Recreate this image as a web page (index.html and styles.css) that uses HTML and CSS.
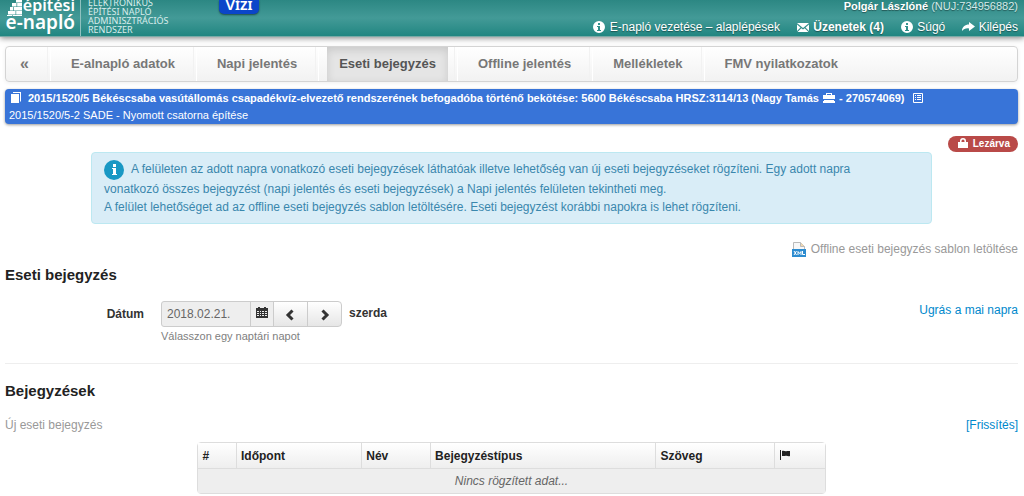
FILE: index.html
```html
<!DOCTYPE html>
<html lang="hu">
<head>
<meta charset="utf-8">
<title>e-napló – Eseti bejegyzés</title>
<link rel="stylesheet" href="styles.css">
</head>
<body>
<svg class="defs" aria-hidden="true">
  <symbol id="info" viewBox="0 0 14 14"><path fill="currentColor" fill-rule="evenodd" d="M7 1a6 6 0 1 0 0 12A6 6 0 0 0 7 1zM6 3h2v2H6zM5 6h3v4h1v1H5v-1h1V7H5z"/></symbol>
</svg>
<header class="top">
  <div class="brand">
    <svg class="bricks" viewBox="0 0 18 18" aria-hidden="true"><path fill="#fff" d="M10-1h6v3.400h-6zM6 3h4.500v3.400H6zM11.200 3H16v3.400h-4.800zM4 7h3v3.400H4zM7.700 7H16v3.400H7.700zM2 11h7.500v3.400H2zM10.200 11H16v3.400h-5.800zM1 15h5v1H1zM6.700 15H16v1H6.700z"/></svg>
    <div class="wordmark"><span class="word-a">építési</span><span class="word-b">e-napló</span></div>
    <div class="tagline">ELEKTRONIKUS<br>ÉPÍTÉSI NAPLÓ<br>ADMINISZTRÁCIÓS<br>RENDSZER</div>
  </div>
  <a class="water" href="#">Vízi</a>
  <div class="account">
    <div class="user"><b>Polgár Lászlóné</b> (NUJ:734956882)</div>
    <nav class="links">
      <a href="#"><svg class="ico"><use href="#info"/></svg> E-napló vezetése – alaplépések</a>
      <a class="mail" href="#"><svg class="ico" viewBox="0 0 14 14"><path fill="currentColor" d="M1 3h12L7 8zM1 4.500l3.500 3L1 11zM13 4.500l-3.500 3L13 11zM5.300 8.300L7 9.600l1.700-1.300L12.500 12h-11z"/></svg> Üzenetek (4)</a>
      <a href="#"><svg class="ico"><use href="#info"/></svg> Súgó</a>
      <a href="#"><svg class="ico" viewBox="0 0 14 14"><path fill="currentColor" d="M8 2l6 4.500L8 11V8.500C5 8 3 9 1 11c0-4 3-6.500 7-6.500z"/></svg> Kilépés</a>
    </nav>
  </div>
</header>
<main>
  <nav class="tabs">
    <a class="back" href="#">«</a><a href="#">E-alnapló adatok</a><a href="#">Napi jelentés</a><a class="active" href="#">Eseti bejegyzés</a><a href="#">Offline jelentés</a><a href="#">Mellékletek</a><a href="#">FMV nyilatkozatok</a>
  </nav>
  <section class="project">
    <div class="project-name"><svg class="ico book" viewBox="0 0 14 14"><path fill="currentColor" d="M4 1h8v9l-1 1V2H4zM2 3h8v9H2z"/></svg>2015/1520/5 Békéscsaba vasútállomás csapadékvíz-elvezető rendszerének befogadóba történő bekötése: 5600 Békéscsaba HRSZ:3114/13 (Nagy Tamás <svg class="ico" viewBox="0 0 14 14"><path fill="currentColor" fill-rule="evenodd" d="M4 4V2h6v2h3v4H1V4zM5 4h4V3H5zM2 9h10v1h1v2H1v-2h1z"/></svg> - 270574069) <svg class="ico list" viewBox="0 0 14 14"><path fill="none" stroke="currentColor" d="M2.500 2.500h9v9h-9zM4 4.500h1M6 4.500h4M4 6.500h1M6 6.500h4M4 8.500h1M6 8.500h4"/></svg></div>
    <div>2015/1520/5-2 SADE - Nyomott csatorna építése</div>
  </section>
  <div class="status"><span class="badge"><svg class="ico" viewBox="0 0 14 14"><path fill="currentColor" fill-rule="evenodd" d="M4 6V5a3 3 0 0 1 6 0v1h2v6H2V6zM5.500 6h3V5a1.500 1.500 0 0 0-3 0z"/></svg> Lezárva</span></div>
  <section class="notice">
    <svg class="notice-ico" viewBox="0 0 20 20" aria-hidden="true"><circle cx="10" cy="10" r="10" fill="#1998c4"/><path fill="#fff" d="M9 4h3v3H9zM8 8h4v6h1v1H8v-1h1V9H8z"/></svg>A felületen az adott napra vonatkozó eseti bejegyzések láthatóak illetve lehetőség van új eseti bejegyzéseket rögzíteni. Egy adott napra vonatkozó összes bejegyzést (napi jelentés és eseti bejegyzések) a Napi jelentés felületen tekintheti meg.<br>A felület lehetőséget ad az offline eseti bejegyzés sablon letöltésére. Eseti bejegyzést korábbi napokra is lehet rögzíteni.
  </section>
  <div class="download"><a class="muted" href="#"><svg class="xml" viewBox="0 0 16 16"><path d="M2.500 8V.5h7l4 4V8" fill="#f8f8f8" stroke="#bbb"/><path d="M9.500.5v4h4" fill="#f3d9b0" stroke="#bbb"/><path d="M1 7h14v8H1z" fill="#2d8cd0"/><path fill="none" stroke="#fff" d="M3 9l2.500 4M5.500 9L3 13M7 13V9.500l1.500 2 1.500-2V13M11.500 9v3.500H14"/></svg>Offline eseti bejegyzés sablon letöltése</a></div>
  <h1>Eseti bejegyzés</h1>
  <form class="date-row">
    <label for="date">Dátum</label>
    <div class="field">
      <div class="picker">
        <input id="date" type="text" value="2018.02.21." readonly aria-describedby="hint"><button class="cal" type="button" aria-label="Naptár"><svg class="ico" viewBox="0 0 14 14"><path fill="currentColor" fill-rule="evenodd" d="M2 2h1V1h2v1h4V1h2v1h2v10H1V2zM2 5v1h2V5zm3 0v1h1V5zm2 0v1h2V5zm3 0v1h2V5zM2 7v1h2V7zm3 0v1h1V7zm2 0v1h2V7zm3 0v1h2V7zM2 9v1h2V9zm3 0v1h1V9zm2 0v1h2V9zm3 0v1h2V9z"/></svg></button><button type="button" aria-label="Előző nap"><svg class="ico" viewBox="0 0 14 14"><path fill="none" stroke="currentColor" stroke-width="3" d="M8.500 2.500L4 7l4.500 4.500"/></svg></button><button type="button" aria-label="Következő nap"><svg class="ico" viewBox="0 0 14 14"><path fill="none" stroke="currentColor" stroke-width="3" d="M4.500 2.500L9 7l-4.500 4.500"/></svg></button><b class="day">szerda</b>
      </div>
      <div class="hint" id="hint">Válasszon egy naptári napot</div>
    </div>
    <a class="today" href="#">Ugrás a mai napra</a>
  </form>
  <h1 class="entries">Bejegyzések</h1>
  <div class="actions"><a class="muted" href="#">Új eseti bejegyzés</a><a href="#">[Frissítés]</a></div>
  <table class="grid">
    <colgroup><col class="c-num"><col class="c-time"><col class="c-name"><col class="c-type"><col class="c-text"><col></colgroup>
    <thead><tr><th>#</th><th>Időpont</th><th>Név</th><th>Bejegyzéstípus</th><th>Szöveg</th><th><svg class="ico" viewBox="0 0 14 14" role="img" aria-label="Jelölés"><path fill="currentColor" d="M1 1h1v10H1zM3 2c2-1 3 1 5 0h3v5C9 8 8 6 6 7H3z"/></svg></th></tr></thead>
    <tbody><tr><td colspan="6">Nincs rögzített adat...</td></tr></tbody>
  </table>
</main>
</body>
</html>
```
FILE: styles.css
```css
* { box-sizing: border-box; }
body { margin: 0; background: #fff; color: #333; font: 12px/18px "Liberation Sans", Arial, sans-serif; }
a { color: #0088cc; text-decoration: none; }
.defs { position: absolute; width: 0; height: 0; }
.ico { width: 14px; height: 14px; vertical-align: -3px; }

.top { display: flex; align-items: flex-end; height: 36px; color: #fff; background: linear-gradient(#2c8783, #439a97 50%, #218681); box-shadow: 0 1px 0 #79aaa7, 0 2px 6px rgba(0, 0, 0, .5); }
.brand { display: flex; flex: 0 0 219px; align-items: flex-end; height: 36px; position: relative; padding-left: 5px; }
.bricks { position: absolute; left: 6px; top: 0; width: 18px; height: 18px; }
.wordmark { display: flex; flex-direction: column; align-items: flex-end; width: 70px; font: 600 19px/17px "Noto Sans", sans-serif; padding-bottom: 5px; }
.word-a { font-size: 16px; }
.tagline { margin-left: 5px; padding-left: 7px; border-left: 1px solid #8fc1bf; font: 9px/9px "Noto Sans", sans-serif; color: #d9edec; padding-bottom: 2px; }
.water { align-self: flex-start; width: 40px; height: 14px; margin-right: auto; border-radius: 0 0 5px 5px; background: #0b45c9; color: #fff; text-align: center; font: 600 15px/9px "Noto Sans", sans-serif; font-variant: small-caps; box-shadow: 0 1px 2px rgba(0, 0, 0, .5); }
.account { padding-right: 6px; text-align: right; text-shadow: 0 1px 1px rgba(0, 0, 0, .4); }
.user { font-size: 11px; line-height: 24px; color: #d5ebea; }
.user b { color: #fff; }
.links { display: flex; gap: 16px; line-height: 18px; }
.links a { color: #fff; }
.mail { font-weight: bold; }

main { padding: 10px 6px 3px 5px; }
.tabs { display: flex; height: 36px; border: 1px solid #d4d4d4; border-radius: 4px; background: linear-gradient(#fff, #f2f2f2); box-shadow: 0 1px 4px rgba(0, 0, 0, .07); font-weight: bold; font-size: 13px; line-height: 34px; }
.tabs a { color: #777; padding: 0 12px; }
.tabs a:not(:last-child)::after { content: ""; float: right; width: 2px; height: 34px; margin-right: -22px; border-left: 1px solid #f2f2f2; border-right: 1px solid #fff; }
.tabs a + a { margin-left: 18px; }
.tabs .back { padding-left: 14px; font-size: 16px; }
.tabs .active { color: #555; background: #e5e5e5; box-shadow: inset 0 3px 8px rgba(0, 0, 0, .125); }

.project { margin-top: 7px; padding: 1px 4px 0; height: 35px; font-size: 11px; line-height: 17px; color: #fff; background: #3874d8; border-radius: 4px; box-shadow: 0 1px 3px rgba(0, 0, 0, .4); }
.project-name { font-weight: bold; }
.book { margin-right: 5px; }
.list { margin-left: 3px; }
.status { display: flex; justify-content: flex-end; margin-top: 12px; }
.badge { height: 16px; padding: 0 8px; border-radius: 9px; background: #b94a48; color: #fff; font-size: 10px; font-weight: bold; line-height: 15px; }
.notice { width: 83%; margin: 0 auto; padding: 7px 36px 7px 12px; border: 1px solid #bce8f1; border-radius: 4px; background: #d9edf7; color: #3a87ad; }
.notice-ico { width: 20px; height: 20px; margin-right: 7px; vertical-align: middle; }
.download { display: flex; justify-content: flex-end; margin-top: 16px; }
.muted { color: #999; }
.xml { width: 16px; height: 16px; margin-right: 4px; vertical-align: -5px; }
h1 { margin: 7px 0 0; font-size: 15px; line-height: 20px; color: #222; }
.date-row { display: flex; margin-top: 16px; }
label { width: 139px; margin-right: 17px; text-align: right; font-weight: bold; line-height: 26px; }
.field { flex: 1; }
.picker { display: flex; height: 26px; }
.picker input { width: 90px; padding: 0 5px; border: 1px solid #ccc; border-radius: 3px 0 0 3px; background: #eee; color: #666; font: 12px "Liberation Sans", Arial, sans-serif; }
.picker button { width: 35px; margin-left: -1px; padding: 0; border: 1px solid #ccc; background: linear-gradient(#fff, #e6e6e6); color: #333; }
.picker .cal { width: 24px; padding-bottom: 4px; background: #eee; }
.picker button:last-of-type { border-radius: 0 4px 4px 0; }
.day { margin-left: 7px; line-height: 24px; }
.hint { color: #808080; font-size: 11px; }
.today { line-height: 18px; }
.entries { margin-top: 18px; padding-top: 17px; border-top: 1px solid #eee; }
.actions { display: flex; justify-content: space-between; margin-top: 15px; }
.grid { width: 62%; margin: 8px auto 0; table-layout: fixed; border: 1px solid #ddd; border-radius: 4px; border-collapse: separate; border-spacing: 0; line-height: 18px; }
.grid th { height: 25px; padding: 3px 4px; text-align: left; color: #222; background: linear-gradient(#fff, #eee); }
.grid th + th { border-left: 1px solid #ddd; }
.grid td { padding: 3px 4px; border-top: 1px solid #ddd; background: #eee; color: #666; font-style: italic; text-align: center; }
.c-num { width: 6%; }
.c-time { width: 20%; }
.c-name { width: 11%; }
.c-type { width: 36%; }
.c-text { width: 19%; }
```
